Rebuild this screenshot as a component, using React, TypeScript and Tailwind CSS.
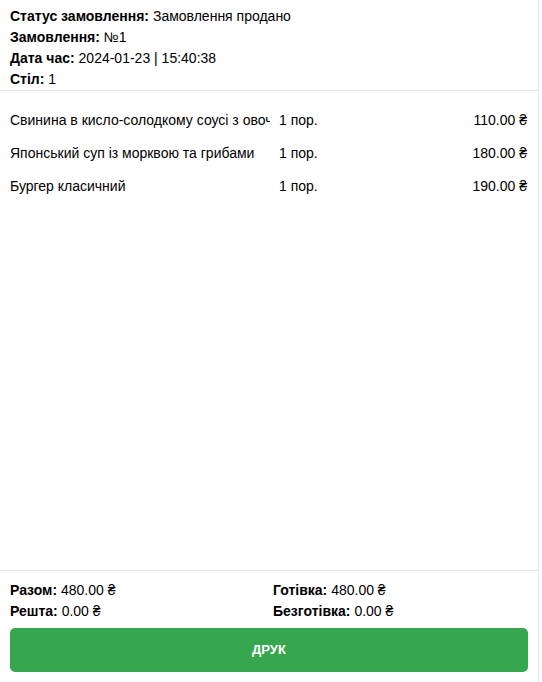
const items = [
  { name: "Свинина в кисло-солодкому соусі з овочами", qty: "1 пор.", price: "110.00" },
  { name: "Японський суп із морквою та грибами", qty: "1 пор.", price: "180.00" },
  { name: "Бургер класичний", qty: "1 пор.", price: "190.00" },
];

function Field({ label, value }: { label: string; value: string }) {
  return (
    <div className="h-[21px] leading-[21px]">
      <span className="font-bold">{label}:</span> {value}
    </div>
  );
}

export default function App() {
  return (
    <div
      className="w-[539px] h-[682px] flex flex-col bg-white border-r border-[#e5e5e5] text-[14px] text-black"
      style={{ fontFamily: '"Liberation Sans", Arial, "DejaVu Sans", sans-serif' }}
    >
      {/* Order info */}
      <div className="px-[10px] pt-[6px] border-b border-[#e5e5e5]">
        <Field label="Статус замовлення" value="Замовлення продано" />
        <Field label="Замовлення" value="№1" />
        <Field label="Дата час" value="2024-01-23 | 15:40:38" />
        <Field label="Стіл" value="1" />
      </div>

      {/* Items */}
      <div className="flex-1 px-[10px] pt-[13px]">
        {items.map((item) => (
          <div key={item.name} className="grid grid-cols-[269px_1fr_auto] h-[33px] items-center">
            <div className="max-w-[260px] overflow-hidden whitespace-nowrap">{item.name}</div>
            <div>{item.qty}</div>
            <div className="pr-[1px]">{item.price} ₴</div>
          </div>
        ))}
      </div>

      {/* Totals */}
      <div className="border-t border-[#e5e5e5] px-[10px] pt-[9px] pb-[10px]">
        <div className="grid grid-cols-[263px_1fr]">
          <Field label="Разом" value="480.00 ₴" />
          <Field label="Готівка" value="480.00 ₴" />
          <Field label="Решта" value="0.00 ₴" />
          <Field label="Безготівка" value="0.00 ₴" />
        </div>
        <button
          type="button"
          className="mt-[6px] w-full h-[44px] rounded-[5px] bg-[#37a74f] text-white font-bold text-[13px] flex items-center justify-center"
        >
          ДРУК
        </button>
      </div>
    </div>
  );
}
